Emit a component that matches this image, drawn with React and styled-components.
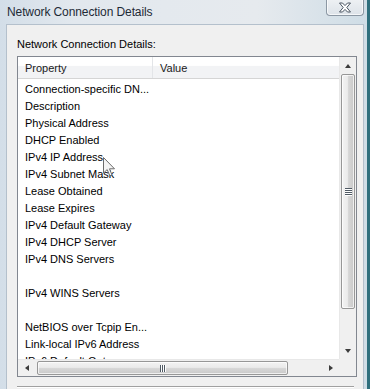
import React from 'react';
import styled, { createGlobalStyle } from 'styled-components';

const rows = [
	'Connection-specific DN...',
	'Description',
	'Physical Address',
	'DHCP Enabled',
	'IPv4 IP Address',
	'IPv4 Subnet Mask',
	'Lease Obtained',
	'Lease Expires',
	'IPv4 Default Gateway',
	'IPv4 DHCP Server',
	'IPv4 DNS Servers',
	'',
	'IPv4 WINS Servers',
	'',
	'NetBIOS over Tcpip En...',
	'Link-local IPv6 Address',
	'IPv6 Default Gateway',
];

export default function App() {
	return (
		<>
			<Global />
			<Window>
				<TitleBar>
					<Title>Network Connection Details</Title>
					<CloseButton>
						<svg width="14" height="11" viewBox="0 0 14 11">
							<path
								d="M1.5 1 L4.5 1 L7 3.6 L9.5 1 L12.5 1 L8.8 5.5 L12.5 10 L9.5 10 L7 7.4 L4.5 10 L1.5 10 L5.2 5.5 Z"
								fill="#ffffff"
								stroke="#4a5562"
								strokeWidth="1"
								strokeLinejoin="round"
							/>
						</svg>
					</CloseButton>
				</TitleBar>
				<Frame>
					<Client>
						<Label>Network Connection Details:</Label>
						<ListBox>
							<ListContent>
								<Header>
									<HeaderCell $width={135}>Property</HeaderCell>
									<HeaderCell>Value</HeaderCell>
								</Header>
								<Rows>
									{rows.map((r, i) => (
										<Row key={i}>{r}</Row>
									))}
								</Rows>
							</ListContent>
							<VScroll>
								<ArrowBox>
									<Tri $dir="up" />
								</ArrowBox>
								<VTrack>
									<VThumb>
										<Grip>
											<span />
											<span />
											<span />
											<span />
										</Grip>
									</VThumb>
								</VTrack>
								<ArrowBox>
									<Tri $dir="down" />
								</ArrowBox>
							</VScroll>
							<HScroll>
								<ArrowBox $h>
									<Tri $dir="left" />
								</ArrowBox>
								<HTrack>
									<HThumb>
										<HGrip>
											<span />
											<span />
											<span />
										</HGrip>
									</HThumb>
								</HTrack>
								<ArrowBox $h>
									<Tri $dir="right" />
								</ArrowBox>
							</HScroll>
							<Corner />
						</ListBox>
						<Separator />
					</Client>
					<Cursor width="14" height="21" viewBox="0 0 14 21">
						<path
							d="M0.5 0.5 L0.5 16 L4.2 12.6 L6.8 18.8 L9 17.9 L6.5 11.8 L11.5 11.8 Z"
							fill="#f4f4f4"
							stroke="#6b6b6b"
							strokeWidth="1"
							strokeLinejoin="round"
						/>
					</Cursor>
				</Frame>
			</Window>
		</>
	);
}

const Global = createGlobalStyle`
	html, body {
		margin: 0;
		padding: 0;
		background: #dfe6ed;
	}
	* {
		box-sizing: border-box;
	}
`;

const Window = styled.div`
	width: 370px;
	height: 389px;
	overflow: hidden;
	display: flex;
	flex-direction: column;
	background: linear-gradient(90deg, #d3dee8 0%, #e2e8ee 20%, #e6eaee 70%, #cfdde6 100%);
	font-family: 'Liberation Sans', Arial, sans-serif;
	border-right: 3px solid #2f6f7d;
`;

const TitleBar = styled.div`
	height: 24px;
	flex: none;
	display: flex;
	align-items: flex-start;
	justify-content: space-between;
	padding-left: 7px;
	padding-right: 3px;
`;

const Title = styled.div`
	font-size: 12px;
	color: #1e2a36;
	padding-top: 5px;
	letter-spacing: -0.1px;
`;

const CloseButton = styled.div`
	width: 38px;
	height: 17px;
	margin-top: -1px;
	border: 1px solid #8c98a4;
	border-top: none;
	border-radius: 0 0 4px 4px;
	background: linear-gradient(#eef1f4, #dde3e9);
	box-shadow: inset 0 0 0 1px rgba(255, 255, 255, 0.7);
	display: flex;
	align-items: center;
	justify-content: center;
`;

const Frame = styled.div`
	flex: 1;
	position: relative;
	display: flex;
	padding: 0 3px 0 6px;
`;

const Client = styled.div`
	flex: 1;
	background: #f0f0f0;
	border-top: 1px solid #b4c0cc;
	border-left: 1px solid #b4c0cc;
	border-right: 1px solid #b4c0cc;
	padding: 13px 6px 0 10px;
	display: flex;
	flex-direction: column;
`;

const Label = styled.div`
	font-size: 11px;
	color: #000;
	height: 18px;
`;

const ListBox = styled.div`
	width: 340px;
	height: 321px;
	flex: none;
	border: 1px solid #828790;
	background: #fff;
	display: grid;
	grid-template-columns: 1fr 17px;
	grid-template-rows: 1fr 17px;
`;

const ListContent = styled.div`
	overflow: hidden;
	display: flex;
	flex-direction: column;
`;

const Header = styled.div`
	height: 22px;
	flex: none;
	display: flex;
	background: linear-gradient(#ffffff 0%, #ffffff 40%, #f2f3f5 45%, #f2f3f5 100%);
	border-bottom: 1px solid #d5d5d5;
`;

const HeaderCell = styled.div`
	width: ${(p) => (p.$width ? `${p.$width}px` : 'auto')};
	flex: ${(p) => (p.$width ? 'none' : '1')};
	font-size: 11px;
	color: #1a1a1a;
	padding-left: 7px;
	display: flex;
	align-items: center;
	border-right: ${(p) => (p.$width ? '1px solid #e3e5e8' : 'none')};
`;

const Rows = styled.div`
	padding-top: 2px;
`;

const Row = styled.div`
	height: 17px;
	line-height: 17px;
	font-size: 11px;
	color: #000;
	padding-left: 7px;
	white-space: nowrap;
`;

const VScroll = styled.div`
	grid-row: 1;
	grid-column: 2;
	display: flex;
	flex-direction: column;
	background: #f0f0f0;
	border-left: 1px solid #e8e8e8;
`;

const HScroll = styled.div`
	grid-row: 2;
	grid-column: 1;
	display: flex;
	background: #f0f0f0;
	border-top: 1px solid #e8e8e8;
`;

const Corner = styled.div`
	grid-row: 2;
	grid-column: 2;
	background: #f0f0f0;
`;

const ArrowBox = styled.div`
	width: ${(p) => (p.$h ? '17px' : '100%')};
	height: ${(p) => (p.$h ? '100%' : '17px')};
	flex: none;
	display: flex;
	align-items: center;
	justify-content: center;
`;

const Tri = styled.div`
	width: 0;
	height: 0;
	border-style: solid;
	${(p) =>
		p.$dir === 'up'
			? 'border-width: 0 3.5px 4px 3.5px; border-color: transparent transparent #3c3c3c transparent;'
			: p.$dir === 'down'
			? 'border-width: 4px 3.5px 0 3.5px; border-color: #3c3c3c transparent transparent transparent;'
			: p.$dir === 'left'
			? 'border-width: 3.5px 4px 3.5px 0; border-color: transparent #3c3c3c transparent transparent;'
			: 'border-width: 3.5px 0 3.5px 4px; border-color: transparent transparent transparent #3c3c3c;'}
`;

const VTrack = styled.div`
	flex: 1;
	padding: 0 1px;
`;

const VThumb = styled.div`
	height: 235px;
	border: 1px solid #979797;
	border-radius: 2px;
	background: linear-gradient(90deg, #f3f3f3 0%, #ebebeb 45%, #d6d6d6 55%, #c9c9c9 100%);
	box-shadow: inset 0 0 0 1px rgba(255, 255, 255, 0.7);
	display: flex;
	align-items: center;
	justify-content: center;
`;

const Grip = styled.div`
	display: flex;
	flex-direction: column;
	gap: 1px;
	margin-top: -1px;
	span {
		display: block;
		width: 7px;
		height: 1px;
		background: #505a64;
		box-shadow: 0 1px 0 #fff;
	}
`;

const HTrack = styled.div`
	flex: 1;
	padding: 1px 0;
	padding-left: 2px;
`;

const HThumb = styled.div`
	width: 251px;
	height: 100%;
	border: 1px solid #979797;
	border-radius: 2px;
	background: linear-gradient(#f3f3f3 0%, #ebebeb 45%, #d6d6d6 55%, #c9c9c9 100%);
	box-shadow: inset 0 0 0 1px rgba(255, 255, 255, 0.7);
	display: flex;
	align-items: center;
	justify-content: center;
`;

const HGrip = styled.div`
	display: flex;
	gap: 1px;
	span {
		display: block;
		width: 1px;
		height: 7px;
		background: #505a64;
		box-shadow: 1px 0 0 #fff;
	}
`;

const Separator = styled.div`
	margin-top: 9px;
	width: 337px;
	height: 2px;
	border-top: 1px solid #a0a0a0;
	border-bottom: 1px solid #ffffff;
`;

const Cursor = styled.svg`
	position: absolute;
	left: 103px;
	top: 133px;
	pointer-events: none;
`;
